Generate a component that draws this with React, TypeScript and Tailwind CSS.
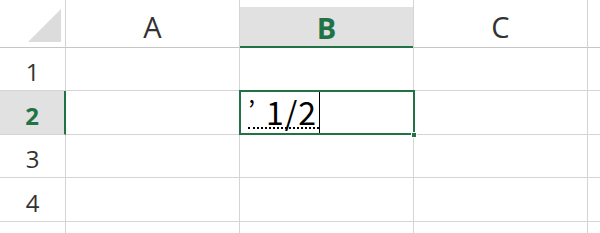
import React from "react";

const hdrFont = { fontFamily: '"Open Sans", "Liberation Sans", sans-serif' };
const cellFont = { fontFamily: '"Noto Sans CJK JP", "Liberation Sans", sans-serif' };

function ColHeader({ label, selected }: { label: string; selected?: boolean }) {
  return (
    <div className="border-r border-b border-[#d4d4d4] border-b-[#c6c6c6] flex flex-col">
      {selected ? (
        <div className="mt-[7px] flex-1 bg-[#e1e1e1] border-b-2 border-[#217346] -mb-px flex items-center justify-center pt-[2px] text-[29px] font-bold text-[#217346] leading-none">
          {label}
        </div>
      ) : (
        <div className="flex-1 flex items-center justify-center pt-[6px] text-[29px] text-[#333] leading-none">
          {label}
        </div>
      )}
    </div>
  );
}

function RowHeader({ label, selected }: { label: string; selected?: boolean }) {
  if (selected) {
    return (
      <div className="bg-[#e1e1e1] border-b border-[#d4d4d4] border-r-2 border-r-[#217346] flex items-center justify-center pt-[6px] text-[24px] font-bold text-[#217346] leading-none">
        {label}
      </div>
    );
  }
  return (
    <div className="border-b border-r border-[#d4d4d4] flex items-center justify-center pt-[6px] text-[24px] text-[#333] leading-none">
      {label}
    </div>
  );
}

function Cell() {
  return <div className="border-r border-b border-[#d4d4d4]" />;
}

export default function App() {
  const rows = ["1", "2", "3", "4"];
  return (
    <div className="w-[600px] h-[233px] bg-white overflow-hidden" style={hdrFont}>
      <div className="grid grid-cols-[66px_174px_174px_174px_1fr] grid-rows-[48px_43px_44px_43px_44px_1fr] h-full">
        {/* corner */}
        <div className="border-r border-b border-[#d4d4d4] border-b-[#c6c6c6] flex items-end justify-end pr-[3px] pb-[4px]">
          <svg width="34" height="34" viewBox="0 0 34 34">
            <polygon points="33,0 33,33 0,33" fill="#dcdcdc" />
          </svg>
        </div>
        <ColHeader label="A" />
        <ColHeader label="B" selected />
        <ColHeader label="C" />
        <div className="border-b border-[#c6c6c6]" />

        {rows.map((r) => (
          <React.Fragment key={r}>
            <RowHeader label={r} selected={r === "2"} />
            <Cell />
            {r === "2" ? (
              <div className="relative border-r border-b border-[#d4d4d4] flex items-stretch">
                <div className="absolute -left-px -top-px w-[176px] h-[45px] border-2 border-[#217346] pointer-events-none" />
                <div className="absolute right-[-4px] bottom-[-4px] w-[6px] h-[6px] bg-[#217346] border border-white" />
                <div className="flex items-end pl-[8px] pb-[5px] border-r border-black mt-[1px]" style={cellFont}>
                  <span className="flex items-end border-b-2 border-dotted border-black leading-none text-[32px] text-black h-[33px]">
                    <span className="w-[18px] self-start text-[26px] leading-none">’</span>
                    <span className="tracking-[1px] pr-[2px]">1/2</span>
                  </span>
                </div>
              </div>
            ) : (
              <Cell />
            )}
            <Cell />
            <div className="border-b border-[#d4d4d4]" />
          </React.Fragment>
        ))}

        <div className="border-r border-[#d4d4d4]" />
        <div className="border-r border-[#d4d4d4]" />
        <div className="border-r border-[#d4d4d4]" />
        <div className="border-r border-[#d4d4d4]" />
        <div />
      </div>
    </div>
  );
}
